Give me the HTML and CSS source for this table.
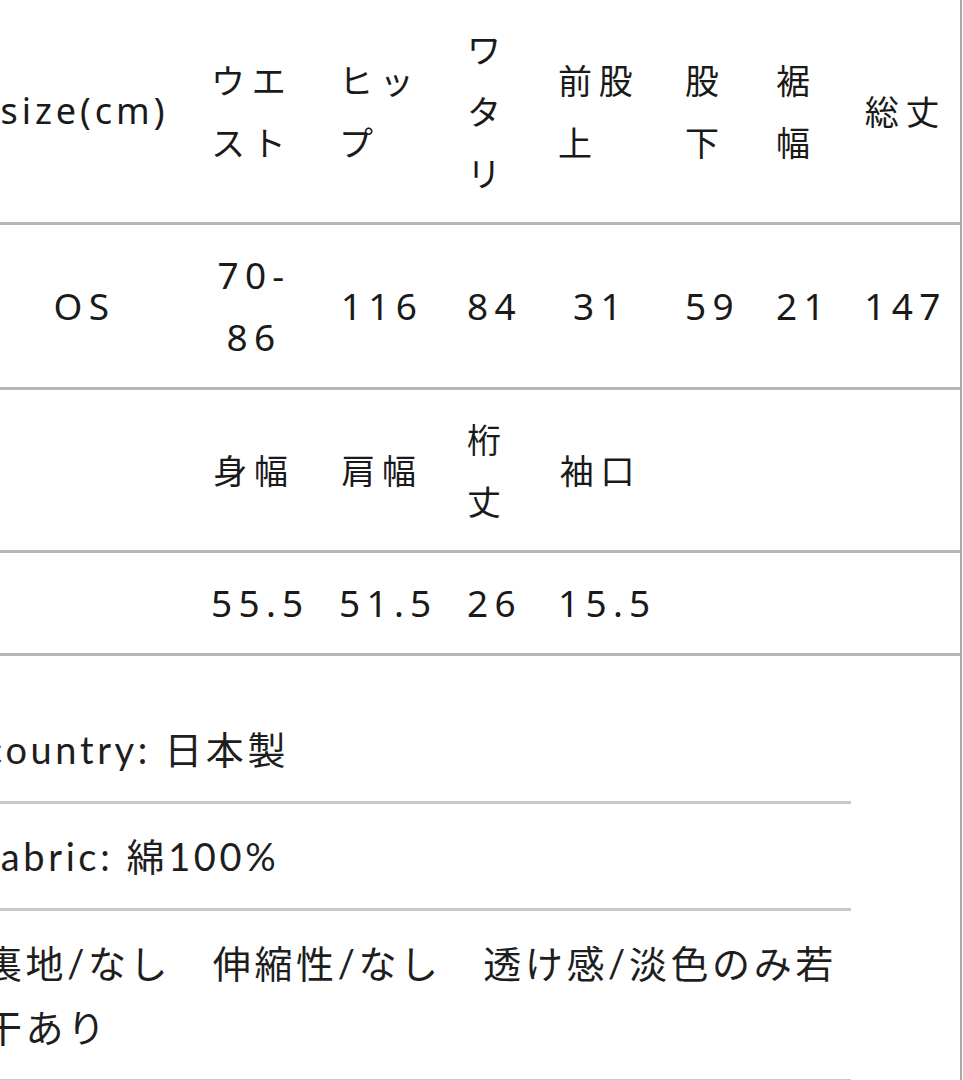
FILE: index.html
```html
<!DOCTYPE html>
<html lang="ja">
<head>
<meta charset="utf-8">
<title>size</title>
<link rel="stylesheet" href="styles.css">
</head>
<body>
<div class="page">
  <table class="size-table">
    <colgroup>
      <col class="c1"><col class="c2"><col class="c3"><col class="c4">
      <col class="c5"><col class="c6"><col class="c7"><col class="c8">
    </colgroup>
    <tr>
      <th><span class="latin">size(cm)</span></th>
      <th><span>ウエスト</span></th>
      <th><span>ヒップ</span></th>
      <th><span>ワタリ</span></th>
      <th><span>前股上</span></th>
      <th><span>股下</span></th>
      <th><span>裾幅</span></th>
      <th><span>総丈</span></th>
    </tr>
    <tr>
      <td>OS</td>
      <td>70-<wbr>86</td>
      <td>116</td>
      <td>84</td>
      <td>31</td>
      <td>59</td>
      <td>21</td>
      <td>147</td>
    </tr>
    <tr>
      <th></th>
      <th><span>身幅</span></th>
      <th><span>肩幅</span></th>
      <th><span>桁丈</span></th>
      <th><span>袖口</span></th>
      <th></th>
      <th></th>
      <th></th>
    </tr>
    <tr>
      <td></td>
      <td>55.5</td>
      <td>51.5</td>
      <td>26</td>
      <td>15.5</td>
      <td></td>
      <td></td>
      <td></td>
    </tr>
  </table>
  <ul class="spec-list">
    <li>country: 日本製</li>
    <li>fabric: 綿100%</li>
    <li>裏地/なし　伸縮性/なし　透け感/淡色のみ若干あり</li>
  </ul>
</div>
</body>
</html>
```

FILE: styles.css
```css
* {
  box-sizing: border-box;
}

html,
body {
  margin: 0;
  padding: 0;
  background: #ffffff;
}

body {
  overflow: hidden;
}

.page {
  margin-left: -21px;
  width: 983px;
  min-height: 1080px;
  border-right: 2px solid #a9a9a9;
}

.size-table {
  width: 100%;
  table-layout: fixed;
  border-collapse: separate;
  border-spacing: 0;
  font-family: "Noto Sans", "Noto Sans CJK JP", sans-serif;
  line-height: 62px;
  color: #1a1a1a;
}

.c1 { width: 211px; }
.c2 { width: 128px; }
.c3 { width: 128px; }
.c4 { width: 91px; }
.c5 { width: 127px; }
.c6 { width: 91px; }
.c7 { width: 87px; }
.c8 { width: 118px; }

.size-table th,
.size-table td {
  border-bottom: 3px solid #b6b6b6;
  text-align: center;
  vertical-align: middle;
  font-weight: 400;
}

.size-table th {
  padding: 18px 21px;
  font-family: "Noto Sans CJK JP", sans-serif;
  font-size: 34px;
  letter-spacing: 0.2em;
}

.size-table td {
  padding: 19px 21px;
  font-size: 37px;
  letter-spacing: 0.17em;
}

.size-table th:last-child,
.size-table td:last-child {
  padding-right: 12px;
}

.size-table th span {
  display: inline-block;
  text-align: left;
  vertical-align: top;
}

.size-table th .latin {
  font-family: "Noto Sans", sans-serif;
  font-size: 36px;
  letter-spacing: 0.11em;
}

.spec-list {
  list-style: none;
  margin: 41px 0 0 5px;
  padding: 0;
  width: 867px;
  font-family: Lato, "Noto Sans CJK JP", sans-serif;
  font-size: 38px;
  letter-spacing: 0.095em;
  line-height: 64px;
  color: #1e1e1e;
}

.spec-list li {
  padding: 20px 0;
  border-bottom: 3px solid #c8c8c8;
}
```
